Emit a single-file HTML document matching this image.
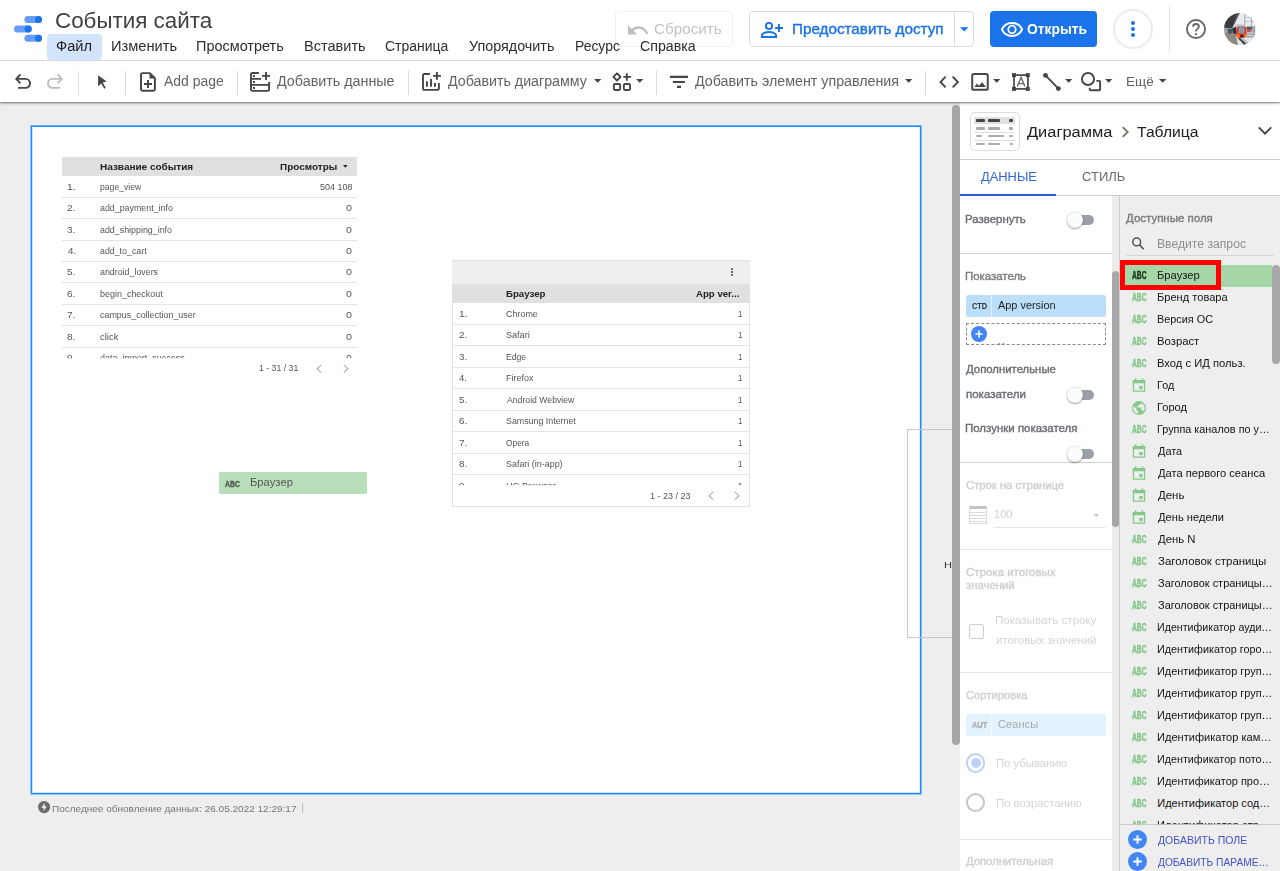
<!DOCTYPE html>
<html lang="ru"><head><meta charset="utf-8"><title>События сайта</title>
<style>
html,body{margin:0;padding:0;}
body{width:1280px;height:871px;overflow:hidden;background:#eeeeee;font-family:"Liberation Sans",sans-serif;}
#root{position:relative;width:1280px;height:871px;overflow:hidden;background:#eeeeee;}
.a{position:absolute;box-sizing:border-box;}
.t{position:absolute;white-space:nowrap;display:block;}
svg{position:absolute;overflow:visible;}
</style></head>
<body>
<div id="root">
<div class="a" style="left:0px;top:0px;width:1280px;height:60px;background:#ffffff;"></div>
<div class="a" style="left:0px;top:60px;width:1280px;height:1px;background:#dadce0;"></div>
<div class="a" style="left:0px;top:61px;width:1280px;height:40.5px;background:#ffffff;box-shadow:0 1px 1.5px rgba(0,0,0,.4),0 2px 3px rgba(0,0,0,.14);z-index:5;"></div>
<svg style="left:13px;top:15px;z-index:6" width="30" height="28" viewBox="13 15 30 28">
<rect x="24.4" y="16.05" width="17.6" height="7" rx="3.5" fill="#669df6"/><circle cx="38.5" cy="19.55" r="3.5" fill="#1a73e8"/>
<rect x="13.9" y="25.4" width="17.9" height="7.2" rx="3.6" fill="#669df6"/><circle cx="28.2" cy="29" r="3.6" fill="#1a73e8"/>
<rect x="24.4" y="34.8" width="17.6" height="7" rx="3.5" fill="#669df6"/><circle cx="38.5" cy="38.3" r="3.5" fill="#1a73e8"/>
</svg>
<div class="a" style="left:47px;top:33.8px;width:55px;height:25.8px;background:#d2e3fc;border-radius:4px;"></div>
<div class="a" style="left:615px;top:11px;width:118px;height:35.5px;border:1px solid #eff0f1;border-radius:4px;background:rgba(255,255,255,.0);"></div>
<svg style="left:628px;top:24.8px" width="20.2" height="9.3" viewBox="0 0 20 9" preserveAspectRatio="none"><path d="M10.5 1.2c-2.65 0-5.05 1-6.9 2.6L0 0.2v9h9L5.4 5.6c1.4-1.15 3.15-1.9 5.1-1.9 3.55 0 6.55 2.3 7.6 5.5L20 8.4C18.6 4.2 14.9 1.2 10.5 1.2z" fill="#bfbfbf"/></svg>
<div class="a" style="left:749px;top:11px;width:225px;height:35.5px;background:#fff;border:1px solid #dadce0;border-radius:4px;"></div>
<div class="a" style="left:954px;top:11.5px;width:1px;height:34.5px;background:#dadce0;"></div>
<svg style="left:760px;top:21px" width="24" height="18" viewBox="760 21 24 18"><g fill="none" stroke="#1a73e8" stroke-width="1.95"><circle cx="769" cy="25.9" r="3.05"/><path d="M761.9 36.9 V35.6 C761.9 33.3 766 32 769 32 S776.1 33.3 776.1 35.6 V36.9 Z"/><path d="M778.9 24.1 V31.9 M775.1 27.9 H783"/></g></svg>
<svg style="left:959.7px;top:26.7px" width="8.5" height="4.5" viewBox="0 0 10 5"><path d="M0 0h10L5 5z" fill="#1a73e8"/></svg>
<div class="a" style="left:990px;top:11px;width:107px;height:35.7px;background:#1a73e8;border-radius:4px;"></div>
<svg style="left:1000px;top:21px" width="24" height="17" viewBox="1000 21 24 17"><g fill="none" stroke="#fff"><path d="M1001.9 29.4 C1003.7 25.4 1007.5 22.9 1012 22.9 S1020.3 25.4 1022.1 29.4 C1020.3 33.4 1016.5 35.9 1012 35.9 S1003.7 33.4 1001.9 29.4 Z" stroke-width="1.95"/><circle cx="1012" cy="29.4" r="3.7" stroke-width="1.8"/></g></svg>
<div class="a" style="left:1113px;top:9px;width:40px;height:40px;border:2px solid #ebecee;border-radius:50%;"></div>
<div class="a" style="left:1130.8000000000002px;top:20.799999999999997px;width:4.2px;height:4.2px;background:#1a73e8;border-radius:50%;"></div>
<div class="a" style="left:1130.8000000000002px;top:26.9px;width:4.2px;height:4.2px;background:#1a73e8;border-radius:50%;"></div>
<div class="a" style="left:1130.8000000000002px;top:32.9px;width:4.2px;height:4.2px;background:#1a73e8;border-radius:50%;"></div>
<div class="a" style="left:1169px;top:6px;width:1px;height:44.6px;background:#dadce0;"></div>
<svg style="left:1186.1px;top:19px" width="20" height="20" viewBox="0 0 20 20"><circle cx="10" cy="10" r="9.05" fill="none" stroke="#63666a" stroke-width="1.9"/><path d="M7 7.7 C7 5.9 8.3 5 10 5 C11.7 5 12.9 6.1 12.9 7.5 C12.9 9.6 9.9 10.1 9.9 12.5" fill="none" stroke="#63666a" stroke-width="1.8"/><rect x="8.9" y="14.2" width="2" height="2" fill="#63666a"/></svg>
<svg style="left:1224px;top:12.7px" width="32" height="32" viewBox="0 0 32 32"><defs><clipPath id="av"><circle cx="16" cy="16.1" r="16"/></clipPath><filter id="bl" x="-10%" y="-10%" width="120%" height="120%"><feGaussianBlur stdDeviation="0.55"/></filter></defs><g clip-path="url(#av)"><g filter="url(#bl)"><rect x="-2" y="-2" width="36" height="36" fill="#dfe1e5"/>
<path d="M-2 -2 H16.5 L10.4 10.5 L8 15.6 L-2 14.5 Z" fill="#3a3a3c"/>
<path d="M13.8 -1 H16.6 L10.6 10.6 L8.3 15 Z" fill="#6e6461"/>
<path d="M16.6 -1 H34 V14 H22 L18 11 H11 Z" fill="#e9ebee"/>
<path d="M20.8 0 V12.5 M27.5 4 V24" stroke="#9aa0a6" stroke-width="0.9" fill="none"/>
<path d="M21 4.5 H29 M22 8.5 H30" stroke="#b4b8bd" stroke-width="0.7" fill="none"/>
<path d="M11.5 10.5 L20 11.5 V14 L12 14.5 Z" fill="#c9ccd1"/>
<path d="M-2 14.5 L8 15.6 L12 13 V22 L14 32 H-2 Z" fill="#8f8782"/>
<path d="M-2 15 L7 16 L4 20 L-2 19 Z" fill="#a9a39e"/>
<rect x="3.8" y="16" width="4.4" height="4.6" fill="#3f5564"/>
<path d="M8 15.5 L12.2 14 V21 L9.5 20.5 Z" fill="#2c3136"/>
<path d="M22.5 13 H31 V26 H22.5 Z" fill="#a4a9af"/>
<path d="M22.5 14.2 H28 V16.5 H22.5 Z" fill="#4a4f57"/>
<rect x="23.3" y="16.8" width="3.2" height="2" fill="#d5452e"/>
<path d="M22.8 20 H30 M22.8 22.5 H30" stroke="#d8dadd" stroke-width="0.8"/>
<path d="M12 24 L16 33 H30 L33 24 L22 25 Z" fill="#e6e8ec"/>
<path d="M13.5 25 L21 33 H25 L16.5 25 Z" fill="#4b4d52"/>
<path d="M19 26 L26 31.5" stroke="#7b7d82" stroke-width="0.8"/>
<path d="M12.1 20.8 C12.1 16 12.8 14 14 13.3 H20.8 C22 14 22.5 16 22.5 20.8 L21.8 24 C20 25 14.5 25 12.8 24 Z" fill="#dc2a1e"/>
<path d="M14.6 13.3 H20.3 C20.8 15.5 20.9 18 20.6 20.6 H14.3 C14.1 18 14.2 15.5 14.6 13.3 Z" fill="#8d979f"/>
<path d="M12.1 20.8 L14.3 20.6 L16 22 H19 L20.6 20.6 L22.5 20.8 L21.8 24 C20 25.2 14.5 25.2 12.8 24 Z" fill="#f5631c"/>
<rect x="16.2" y="22" width="3.4" height="2.4" fill="#262b36"/>
</g></g></svg>
<div class="a" style="left:78px;top:71px;width:1px;height:23.7px;background:#dadce0;z-index:6;"></div>
<div class="a" style="left:124.9px;top:71px;width:1px;height:23.7px;background:#dadce0;z-index:6;"></div>
<div class="a" style="left:237px;top:71px;width:1px;height:23.7px;background:#dadce0;z-index:6;"></div>
<div class="a" style="left:408px;top:71px;width:1px;height:23.7px;background:#dadce0;z-index:6;"></div>
<div class="a" style="left:655.7px;top:71px;width:1px;height:23.7px;background:#dadce0;z-index:6;"></div>
<div class="a" style="left:925px;top:71px;width:1px;height:23.7px;background:#dadce0;z-index:6;"></div>
<svg style="left:14px;top:72px;z-index:6;" width="19" height="18" viewBox="14 72 19 18"><path d="M20.4 74.5 L16.3 78.9 L20.4 83.3 M16.6 78.9 H25.5 a4.5 4.5 0 0 1 0 9 H18.1" fill="none" stroke="#444746" stroke-width="1.9"/></svg>
<svg style="left:46px;top:72px;z-index:6;" width="19" height="18" viewBox="46 72 19 18"><path d="M57.7 74.5 L61.8 78.9 L57.7 83.3 M61.5 78.9 H52.5 a4.5 4.5 0 0 0 0 9 H59.9" fill="none" stroke="#bdbdbd" stroke-width="1.9"/></svg>
<svg style="left:97px;top:74px;z-index:6;" width="12" height="16" viewBox="97 74 12 16"><path d="M98.1 75.2 L106.7 81.4 L102.7 82.6 L105.7 87.8 L104.3 88.7 L101.2 83.5 L98.1 86.2 Z" fill="#444746"/></svg>
<svg style="left:139px;top:71px;z-index:6;" width="18" height="22" viewBox="139 71 18 22"><path d="M142.5 73.1 H149.8 L154.9 78.2 V89.3 a1.5 1.5 0 0 1 -1.5 1.5 H142.5 a1.5 1.5 0 0 1 -1.5 -1.5 V74.6 a1.5 1.5 0 0 1 1.5 -1.5 Z" fill="none" stroke="#444746" stroke-width="1.95" stroke-linejoin="round"/><path d="M149.5 73.1 V78.6 H154.9 Z" fill="#444746"/><path d="M148 80 V88 M144 84 H152" stroke="#444746" stroke-width="1.9" fill="none"/></svg>
<svg style="left:249px;top:71px;z-index:6;" width="22" height="22" viewBox="249 71 22 22"><g fill="none" stroke="#444746" stroke-width="1.9"><path d="M258.8 73 H252.3 a1.3 1.3 0 0 0 -1.3 1.3 V89.6 a1.3 1.3 0 0 0 1.3 1.3 H267.8 a1.3 1.3 0 0 0 1.3 -1.3 V82.1"/><path d="M251 78.9 H261 M251 84.9 H269.1"/><path d="M266 72 V80 M262 75.9 H270"/></g><rect x="253" y="75.1" width="2" height="2" fill="#444746"/><rect x="253" y="81" width="2" height="2" fill="#444746"/><rect x="253" y="87" width="2" height="2" fill="#444746"/></svg>
<svg style="left:421px;top:71px;z-index:6;" width="22" height="22" viewBox="421 71 22 22"><g fill="none" stroke="#444746" stroke-width="1.9"><path d="M429.9 74 H424.3 a1.3 1.3 0 0 0 -1.3 1.3 V88.6 a1.3 1.3 0 0 0 1.3 1.3 H437.6 a1.3 1.3 0 0 0 1.3 -1.3 V83"/><path d="M436.9 72 V79.8 M433 75.9 H441"/><path d="M426.9 81.2 V86.8 M431 79 V86.8 M435 83 V86.8"/></g></svg>
<svg style="left:593.8px;top:79.2px;z-index:6;" width="7.4" height="3.9" viewBox="0 0 10 5"><path d="M0 0h10L5 5z" fill="#444746"/></svg>
<svg style="left:611px;top:71px;z-index:6;" width="22" height="22" viewBox="611 71 22 22"><g fill="none" stroke="#444746" stroke-width="1.9"><path d="M616.95 73.3 L620.55 76.9 L616.95 80.5 L613.35 76.9 Z" stroke-linejoin="round"/><rect x="613.85" y="84.05" width="6.3" height="6" rx="1.2"/><rect x="623.85" y="84.05" width="6.2" height="6" rx="1.2"/><path d="M626.8 73.2 V80.8 M623.3 76.9 H631.1"/></g></svg>
<svg style="left:635.5px;top:79.2px;z-index:6;" width="7.4" height="3.9" viewBox="0 0 10 5"><path d="M0 0h10L5 5z" fill="#444746"/></svg>
<svg style="left:669px;top:75px;z-index:6;" width="20" height="13" viewBox="669 75 20 13"><path d="M669.9 76.9 H688 M672.9 82 H684.9 M677 86.9 H681" stroke="#444746" stroke-width="2.1" fill="none"/></svg>
<svg style="left:904.8px;top:79.2px;z-index:6;" width="7.4" height="3.9" viewBox="0 0 10 5"><path d="M0 0h10L5 5z" fill="#444746"/></svg>
<svg style="left:938px;top:75px;z-index:6;" width="23" height="14" viewBox="938 75 23 14"><path d="M945.6 76.6 L940.5 82 L945.6 87.3 M952.7 76.6 L957.9 82 L952.7 87.3" stroke="#444746" stroke-width="1.9" fill="none"/></svg>
<svg style="left:970px;top:72px;z-index:6;" width="20" height="20" viewBox="970 72 20 20"><rect x="972.2" y="74" width="15.55" height="15.8" rx="1.6" fill="none" stroke="#444746" stroke-width="1.95"/><path d="M974.4 86.9 L976.9 83.4 L978.9 85.7 L982.2 82.2 L985.9 86.9 Z" fill="#444746"/></svg>
<svg style="left:993.4px;top:79.2px;z-index:6;" width="7.4" height="3.9" viewBox="0 0 10 5"><path d="M0 0h10L5 5z" fill="#444746"/></svg>
<svg style="left:1011px;top:72px;z-index:6;" width="20" height="20" viewBox="1011 72 20 20"><rect x="1014" y="75.1" width="13.9" height="13.8" fill="none" stroke="#444746" stroke-width="1.7"/><g fill="#444746"><rect x="1012" y="73.1" width="4" height="4"/><rect x="1025.8" y="73.1" width="4" height="4"/><rect x="1012" y="86.9" width="4" height="4"/><rect x="1025.8" y="86.9" width="4" height="4"/></g><path d="M1017.3 86.6 L1021.1 77.3 L1024.9 86.6 M1018.6 83.7 H1023.6" fill="none" stroke="#5f6368" stroke-width="1.3"/></svg>
<svg style="left:1042px;top:72px;z-index:6;" width="20" height="20" viewBox="1042 72 20 20"><path d="M1045.5 75.4 L1058.4 88.6" stroke="#444746" stroke-width="1.9"/><circle cx="1045.5" cy="75.4" r="2.45" fill="#444746"/><circle cx="1058.4" cy="88.6" r="2.45" fill="#444746"/></svg>
<svg style="left:1065.4px;top:79.2px;z-index:6;" width="7.4" height="3.9" viewBox="0 0 10 5"><path d="M0 0h10L5 5z" fill="#444746"/></svg>
<svg style="left:1080px;top:71px;z-index:6;" width="23" height="22" viewBox="1080 71 23 22"><circle cx="1088" cy="79" r="6.05" fill="none" stroke="#444746" stroke-width="1.9"/><path d="M1096.4 80.9 H1099.1 a1 1 0 0 1 1 1 V89.2 a1 1 0 0 1 -1 1 H1090.7 a1 1 0 0 1 -1 -1 V87.8" fill="none" stroke="#444746" stroke-width="1.9"/></svg>
<svg style="left:1105.4px;top:79.2px;z-index:6;" width="7.4" height="3.9" viewBox="0 0 10 5"><path d="M0 0h10L5 5z" fill="#444746"/></svg>
<svg style="left:1158.6px;top:79.2px;z-index:6;" width="7.4" height="3.9" viewBox="0 0 10 5"><path d="M0 0h10L5 5z" fill="#444746"/></svg>
<svg style="left:0;top:0" width="960" height="871" viewBox="0 0 960 871"><rect x="31.4" y="126.2" width="889.3" height="667.4" fill="#ffffff" stroke="#1e8cff" stroke-width="1.65"/></svg>
<div class="a" style="left:907px;top:428.6px;width:50px;height:209px;border:1px solid #c8c8c8;border-right:none;"></div>
<div class="a" style="left:952.2px;top:105px;width:7.6px;height:640px;background:#a6a6a6;border-radius:4px 4px 4px 4px;"></div>
<div class="a" style="left:61.7px;top:156.8px;width:295.6px;height:18.8px;background:#e0e0e0;"></div>
<svg style="left:342.8px;top:164.5px" width="4.6" height="2.8" viewBox="0 0 10 6"><path d="M0 0h10L5 6z" fill="#222"/></svg>
<div class="a" style="left:61.7px;top:196.7px;width:295.6px;height:1px;background:#e3e3e3;"></div>
<div class="a" style="left:61.7px;top:218.14px;width:295.6px;height:1px;background:#e3e3e3;"></div>
<div class="a" style="left:61.7px;top:239.57999999999998px;width:295.6px;height:1px;background:#e3e3e3;"></div>
<div class="a" style="left:61.7px;top:261.02px;width:295.6px;height:1px;background:#e3e3e3;"></div>
<div class="a" style="left:61.7px;top:282.46px;width:295.6px;height:1px;background:#e3e3e3;"></div>
<div class="a" style="left:61.7px;top:303.9px;width:295.6px;height:1px;background:#e3e3e3;"></div>
<div class="a" style="left:61.7px;top:325.34000000000003px;width:295.6px;height:1px;background:#e3e3e3;"></div>
<div class="a" style="left:61.7px;top:346.78px;width:295.6px;height:1px;background:#e3e3e3;"></div>
<svg style="left:316.4px;top:363.6px" width="6" height="9.5" viewBox="0 0 6 9.5"><path d="M5.2 0.8 L1 4.75 L5.2 8.7" fill="none" stroke="#adadad" stroke-width="1.1"/></svg>
<svg style="left:343px;top:363.6px" width="6" height="9.5" viewBox="0 0 6 9.5"><path d="M0.8 0.8 L5 4.75 L0.8 8.7" fill="none" stroke="#adadad" stroke-width="1.1"/></svg>
<div class="a" style="left:451.7px;top:260.2px;width:298.6px;height:246.6px;background:#ffffff;border:1px solid #e2e2e2;"></div>
<div class="a" style="left:452.2px;top:260.7px;width:297.6px;height:23.5px;background:#efefef;"></div>
<div class="a" style="left:730.6px;top:267.7px;width:2.1px;height:2.1px;background:#444;border-radius:50%;"></div>
<div class="a" style="left:730.6px;top:271px;width:2.1px;height:2.1px;background:#444;border-radius:50%;"></div>
<div class="a" style="left:730.6px;top:274.3px;width:2.1px;height:2.1px;background:#444;border-radius:50%;"></div>
<div class="a" style="left:452.2px;top:284.2px;width:297.6px;height:18.6px;background:#e0e0e0;"></div>
<div class="a" style="left:452.2px;top:323.5px;width:297.6px;height:1px;background:#e3e3e3;"></div>
<div class="a" style="left:452.2px;top:345px;width:297.6px;height:1px;background:#e3e3e3;"></div>
<div class="a" style="left:452.2px;top:366.5px;width:297.6px;height:1px;background:#e3e3e3;"></div>
<div class="a" style="left:452.2px;top:388px;width:297.6px;height:1px;background:#e3e3e3;"></div>
<div class="a" style="left:452.2px;top:409.5px;width:297.6px;height:1px;background:#e3e3e3;"></div>
<div class="a" style="left:452.2px;top:431px;width:297.6px;height:1px;background:#e3e3e3;"></div>
<div class="a" style="left:452.2px;top:452.5px;width:297.6px;height:1px;background:#e3e3e3;"></div>
<div class="a" style="left:452.2px;top:474px;width:297.6px;height:1px;background:#e3e3e3;"></div>
<svg style="left:708px;top:491.2px" width="6" height="9.5" viewBox="0 0 6 9.5"><path d="M5.2 0.8 L1 4.75 L5.2 8.7" fill="none" stroke="#adadad" stroke-width="1.1"/></svg>
<svg style="left:734.4px;top:491.2px" width="6" height="9.5" viewBox="0 0 6 9.5"><path d="M0.8 0.8 L5 4.75 L0.8 8.7" fill="none" stroke="#adadad" stroke-width="1.1"/></svg>
<div class="a" style="left:219px;top:472px;width:148px;height:21.8px;background:#b9dfba;border-radius:1.5px;"></div>
<svg style="left:37.8px;top:800.9px" width="12.2" height="12.2" viewBox="0 0 12 12"><circle cx="6" cy="6" r="6" fill="#6b6b6b"/><path d="M6.9 1.8 L3.4 6.7 H5.7 L5.1 10.2 L8.6 5.3 H6.3 Z" fill="#fff"/></svg>
<div class="a" style="left:302px;top:803px;width:1px;height:9.5px;background:#c4c4c4;"></div>
<div class="a" style="left:960px;top:101.5px;width:320px;height:770px;background:#ffffff;"></div>
<div class="a" style="left:970.2px;top:112.2px;width:49.6px;height:38.5px;background:#fff;border:1px solid #dadce0;border-radius:5px;"></div>
<div class="a" style="left:974px;top:117.3px;width:40.8px;height:7px;background:#e0e0e0;"></div>
<div class="a" style="left:975.9px;top:119.4px;width:9.5px;height:2.7px;background:#444;border-radius:1px;"></div>
<div class="a" style="left:975.9px;top:127.1px;width:9.5px;height:2.5px;background:#aaa;border-radius:1px;"></div>
<div class="a" style="left:988.2px;top:119.4px;width:12px;height:2.7px;background:#444;border-radius:1px;"></div>
<div class="a" style="left:988.2px;top:127.1px;width:12px;height:2.5px;background:#aaa;border-radius:1px;"></div>
<div class="a" style="left:1008.5px;top:119.4px;width:4.6px;height:2.7px;background:#444;border-radius:1px;"></div>
<div class="a" style="left:1008.5px;top:127.1px;width:4.6px;height:2.5px;background:#aaa;border-radius:1px;"></div>
<div class="a" style="left:975.9px;top:134.8px;width:6.6px;height:2.5px;background:#aaa;border-radius:1px;"></div>
<div class="a" style="left:988.2px;top:134.8px;width:15.8px;height:2.5px;background:#aaa;border-radius:1px;"></div>
<div class="a" style="left:1008.5px;top:134.8px;width:4.6px;height:2.5px;background:#aaa;border-radius:1px;"></div>
<div class="a" style="left:975.9px;top:142.5px;width:9.5px;height:2.5px;background:#aaa;border-radius:1px;"></div>
<div class="a" style="left:988.2px;top:142.5px;width:12px;height:2.5px;background:#aaa;border-radius:1px;"></div>
<div class="a" style="left:1009.6px;top:142.5px;width:3.5px;height:2.5px;background:#aaa;border-radius:1px;"></div>
<div class="a" style="left:974px;top:132px;width:40.8px;height:0.8px;background:#dddddd;"></div>
<div class="a" style="left:974px;top:140px;width:40.8px;height:0.8px;background:#dddddd;"></div>
<svg style="left:1121px;top:126px" width="9" height="12" viewBox="1121 126 9 12"><path d="M1122.7 127.2 L1127.7 132 L1122.7 136.8" fill="none" stroke="#74745f" stroke-width="1.8"/></svg>
<svg style="left:1257px;top:125px" width="16" height="11" viewBox="1257 125 16 11"><path d="M1258.8 127.3 L1265 133.6 L1271.2 127.3" fill="none" stroke="#444" stroke-width="1.9"/></svg>
<div class="a" style="left:960px;top:159px;width:320px;height:1px;background:#cfcfcf;"></div>
<div class="a" style="left:960px;top:195px;width:320px;height:1px;background:#cccccc;"></div>
<div class="a" style="left:960px;top:193.5px;width:96px;height:2.5px;background:#2a5bd7;"></div>
<div class="a" style="left:1112px;top:196px;width:7px;height:675px;background:#ececec;"></div>
<div class="a" style="left:1119px;top:196px;width:1px;height:675px;background:#cccccc;"></div>
<div class="a" style="left:1120px;top:196px;width:160px;height:675px;background:#eeeeee;"></div>
<div class="a" style="left:1112.4px;top:270.8px;width:6.6px;height:256.7px;background:#a8a8a8;border-radius:3.5px;"></div>
<div class="a" style="left:1073.5px;top:215px;width:20px;height:10px;background:#9aa0a6;border-radius:5px;"></div>
<div class="a" style="left:1067px;top:212px;width:16px;height:16px;background:#fcfcfc;border-radius:50%;box-shadow:0 1px 2px rgba(0,0,0,.35),0 0 1px rgba(0,0,0,.25);"></div>
<div class="a" style="left:960px;top:253px;width:152px;height:1px;background:#d2d2d2;"></div>
<div class="a" style="left:966px;top:294.9px;width:140px;height:22.1px;background:#bbdefb;border-radius:2.5px;"></div>
<div class="a" style="left:990.6px;top:294.9px;width:1px;height:22.1px;background:#e6f2fd;"></div>
<div class="a" style="left:966px;top:323.2px;width:140px;height:21.5px;border:1px dashed #8c8c8c;"></div>
<div class="a" style="left:971.1px;top:325.9px;width:16px;height:16px;background:#4285f4;border-radius:50%;"></div>
<svg style="left:971.1px;top:325.9px" width="16" height="16" viewBox="0 0 16 16"><path d="M8 4.4 V11.6 M4.4 8 H11.6" stroke="#fff" stroke-width="1.7" fill="none"/></svg>
<div class="a" style="left:998px;top:342px;width:12px;height:2.5px;overflow:hidden;"><span class="t" style="left:0;top:0;font-size:8px;line-height:8px;color:#777;">M</span></div>
<div class="a" style="left:1073.5px;top:389.9px;width:20px;height:10px;background:#9aa0a6;border-radius:5px;"></div>
<div class="a" style="left:1067px;top:386.9px;width:16px;height:16px;background:#fcfcfc;border-radius:50%;box-shadow:0 1px 2px rgba(0,0,0,.35),0 0 1px rgba(0,0,0,.25);"></div>
<div class="a" style="left:960px;top:462.2px;width:152px;height:1px;background:#d2d2d2;"></div>
<div class="a" style="left:1073.5px;top:449px;width:20px;height:10px;background:#9aa0a6;border-radius:5px;"></div>
<div class="a" style="left:1067px;top:446px;width:16px;height:16px;background:#fcfcfc;border-radius:50%;box-shadow:0 1px 2px rgba(0,0,0,.35),0 0 1px rgba(0,0,0,.25);"></div>
<div class="a" style="left:969.2px;top:506px;width:17.8px;height:2.8px;background:#c4c4c4;"></div>
<div class="a" style="left:969.2px;top:511.5px;width:17.8px;height:0.7px;background:#dcdcdc;"></div>
<div class="a" style="left:969.2px;top:514.5px;width:17.8px;height:0.7px;background:#dcdcdc;"></div>
<div class="a" style="left:969.2px;top:517.5px;width:17.8px;height:0.7px;background:#dcdcdc;"></div>
<div class="a" style="left:969.2px;top:520.5px;width:17.8px;height:0.7px;background:#dcdcdc;"></div>
<div class="a" style="left:969.2px;top:523.4px;width:17.8px;height:0.7px;background:#dcdcdc;"></div>
<div class="a" style="left:969.2px;top:506px;width:0.7px;height:18px;background:#dcdcdc;"></div>
<div class="a" style="left:986.3px;top:506px;width:0.7px;height:18px;background:#dcdcdc;"></div>
<svg style="left:1093.4px;top:513.6px" width="6.4" height="3.2" viewBox="0 0 10 5"><path d="M0 0h10L5 5z" fill="#cccccc"/></svg>
<div class="a" style="left:994.3px;top:527px;width:111.5px;height:1px;background:#e6e6e6;"></div>
<div class="a" style="left:960px;top:549px;width:152px;height:1px;background:#e4e4e4;"></div>
<div class="a" style="left:968.5px;top:623.5px;width:15px;height:15px;background:#fff;border:1.8px solid #cdcdcd;border-radius:2px;"></div>
<div class="a" style="left:960px;top:672px;width:152px;height:1px;background:#e4e4e4;"></div>
<div class="a" style="left:966px;top:713.8px;width:140px;height:22px;background:#e3f2fd;border-radius:2.5px;"></div>
<div class="a" style="left:990.6px;top:713.8px;width:1px;height:22px;background:#f3f9fe;"></div>
<div class="a" style="left:966.3px;top:753.4px;width:19.2px;height:19.2px;background:#fff;border:2px solid #bcd2fb;border-radius:50%;"></div>
<div class="a" style="left:970.9px;top:758px;width:10px;height:10px;background:#bcd2fb;border-radius:50%;"></div>
<div class="a" style="left:966.3px;top:793.3px;width:19.2px;height:19.2px;background:#fff;border:2px solid #c6c6c6;border-radius:50%;"></div>
<div class="a" style="left:960px;top:838.6px;width:152px;height:1px;background:#e4e4e4;"></div>
<svg style="left:1131px;top:236px" width="14" height="15" viewBox="1131 236 14 15"><circle cx="1136.7" cy="241.9" r="3.9" fill="none" stroke="#555" stroke-width="1.5"/><path d="M1139.6 244.9 L1143.7 249.3" stroke="#555" stroke-width="1.6"/></svg>
<div class="a" style="left:1126.3px;top:255px;width:147.7px;height:1px;background:#d4d4d4;"></div>
<div class="a" style="left:1120px;top:264.8px;width:152px;height:22px;background:#a5d6a7;"></div>
<svg style="left:1132px;top:378.2px" width="14" height="14" viewBox="0 0 14 14"><path d="M1.45 2.6 H12.55 V13.1 H1.45 Z" fill="none" stroke="#85c888" stroke-width="1.3"/><rect x="0.8" y="1.95" width="12.4" height="3.3" fill="#85c888"/><rect x="2.9" y="0.2" width="1.4" height="2.5" fill="#85c888"/><rect x="9.7" y="0.2" width="1.4" height="2.5" fill="#85c888"/><rect x="7.3" y="8" width="3.3" height="3.2" fill="#85c888"/></svg>
<svg style="left:1131.8px;top:401.2px" width="14" height="14" viewBox="0 0 14 14"><circle cx="7" cy="7" r="7" fill="#85c888"/><path d="M6.2 1.3 C4 1.6 2.2 3 1.5 5 L4.5 7.8 V9 L6.2 10.7 V12.7 C3.5 12.3 1.3 10 1.3 7 C1.3 4 3.4 1.7 6.2 1.3 Z M11.6 10.3 C11.3 9.6 10.7 9.2 10 9.2 H9.3 V7.3 C9.3 6.9 9 6.6 8.6 6.6 H4.8 V5.3 H6.1 C6.5 5.3 6.8 5 6.8 4.6 V3.4 H8.1 C8.8 3.4 9.3 2.9 9.3 2.2 V1.9 C11.3 2.7 12.7 4.7 12.7 7 C12.7 8.3 12.3 9.4 11.6 10.3 Z" fill="#eeeeee"/></svg>
<svg style="left:1132px;top:444.2px" width="14" height="14" viewBox="0 0 14 14"><path d="M1.45 2.6 H12.55 V13.1 H1.45 Z" fill="none" stroke="#85c888" stroke-width="1.3"/><rect x="0.8" y="1.95" width="12.4" height="3.3" fill="#85c888"/><rect x="2.9" y="0.2" width="1.4" height="2.5" fill="#85c888"/><rect x="9.7" y="0.2" width="1.4" height="2.5" fill="#85c888"/><rect x="7.3" y="8" width="3.3" height="3.2" fill="#85c888"/></svg>
<svg style="left:1132px;top:466.2px" width="14" height="14" viewBox="0 0 14 14"><path d="M1.45 2.6 H12.55 V13.1 H1.45 Z" fill="none" stroke="#85c888" stroke-width="1.3"/><rect x="0.8" y="1.95" width="12.4" height="3.3" fill="#85c888"/><rect x="2.9" y="0.2" width="1.4" height="2.5" fill="#85c888"/><rect x="9.7" y="0.2" width="1.4" height="2.5" fill="#85c888"/><rect x="7.3" y="8" width="3.3" height="3.2" fill="#85c888"/></svg>
<svg style="left:1132px;top:488.2px" width="14" height="14" viewBox="0 0 14 14"><path d="M1.45 2.6 H12.55 V13.1 H1.45 Z" fill="none" stroke="#85c888" stroke-width="1.3"/><rect x="0.8" y="1.95" width="12.4" height="3.3" fill="#85c888"/><rect x="2.9" y="0.2" width="1.4" height="2.5" fill="#85c888"/><rect x="9.7" y="0.2" width="1.4" height="2.5" fill="#85c888"/><rect x="7.3" y="8" width="3.3" height="3.2" fill="#85c888"/></svg>
<svg style="left:1132px;top:510.19999999999993px" width="14" height="14" viewBox="0 0 14 14"><path d="M1.45 2.6 H12.55 V13.1 H1.45 Z" fill="none" stroke="#85c888" stroke-width="1.3"/><rect x="0.8" y="1.95" width="12.4" height="3.3" fill="#85c888"/><rect x="2.9" y="0.2" width="1.4" height="2.5" fill="#85c888"/><rect x="9.7" y="0.2" width="1.4" height="2.5" fill="#85c888"/><rect x="7.3" y="8" width="3.3" height="3.2" fill="#85c888"/></svg>
<div class="a" style="left:1120px;top:260px;width:101px;height:30px;border:5px solid #ff0000;"></div>
<div class="a" style="left:1272.3px;top:264.7px;width:7.7px;height:99.7px;background:#a8a8a8;border-radius:4px;"></div>
<div class="a" style="left:1120px;top:824.3px;width:160px;height:46.7px;background:#eeeeee;"></div>
<div class="a" style="left:1120px;top:824px;width:160px;height:1px;background:#cccccc;"></div>
<div class="a" style="left:1128.4px;top:830.4px;width:19px;height:19px;background:#4285f4;border-radius:50%;"></div>
<svg style="left:1128.4px;top:830.4px" width="19" height="19" viewBox="0 0 19 19"><path d="M9.5 5.3 V13.7 M5.3 9.5 H13.7" stroke="#fff" stroke-width="1.9" fill="none"/></svg>
<div class="a" style="left:1128.4px;top:852.2px;width:19px;height:19px;background:#4285f4;border-radius:50%;"></div>
<svg style="left:1128.4px;top:852.2px" width="19" height="19" viewBox="0 0 19 19"><path d="M9.5 5.3 V13.7 M5.3 9.5 H13.7" stroke="#fff" stroke-width="1.9" fill="none"/></svg>
<span class="t" style="left:55.11px;top:8px;font-size:21.6px;line-height:25px;color:#3c4043;transform:scaleX(1.0358);transform-origin:0 0;">События сайта</span>
<span class="t" style="left:56.15px;top:38px;font-size:14px;line-height:16px;color:#202124;transform:scaleX(1.0493);transform-origin:0 0;">Файл</span>
<span class="t" style="left:110.8px;top:38px;font-size:14px;line-height:16px;color:#2b2d30;transform:scaleX(1.0459);transform-origin:0 0;">Изменить</span>
<span class="t" style="left:195.83px;top:38px;font-size:14px;line-height:16px;color:#2b2d30;transform:scaleX(1.0324);transform-origin:0 0;">Просмотреть</span>
<span class="t" style="left:303.81px;top:38px;font-size:14px;line-height:16px;color:#2b2d30;transform:scaleX(1.0385);transform-origin:0 0;">Вставить</span>
<span class="t" style="left:384.79px;top:38px;font-size:14px;line-height:16px;color:#2b2d30;transform:scaleX(0.9962);transform-origin:0 0;">Страница</span>
<span class="t" style="left:468.61px;top:38px;font-size:14px;line-height:16px;color:#2b2d30;transform:scaleX(1.0245);transform-origin:0 0;">Упорядочить</span>
<span class="t" style="left:575.16px;top:38px;font-size:14px;line-height:16px;color:#2b2d30;transform:scaleX(0.9934);transform-origin:0 0;">Ресурс</span>
<span class="t" style="left:639.98px;top:38px;font-size:14px;line-height:16px;color:#2b2d30;transform:scaleX(1.0148);transform-origin:0 0;">Справка</span>
<span class="t" style="left:653.93px;top:21px;font-size:14px;line-height:16px;color:#c2c2c2;transform:scaleX(1.0896);transform-origin:0 0;">Сбросить</span>
<span class="t" style="left:792.37px;top:21px;font-size:14px;line-height:16px;color:#1a73e8;transform:scaleX(1.0881);transform-origin:0 0;-webkit-text-stroke:0.35px #1a73e8;">Предоставить доступ</span>
<span class="t" style="left:1027.33px;top:21px;font-size:14px;line-height:16px;color:#ffffff;transform:scaleX(0.9871);transform-origin:0 0;font-weight:700;">Открыть</span>
<span class="t" style="left:163.97px;top:73px;font-size:14px;line-height:16px;color:#5f6368;transform:scaleX(0.995);transform-origin:0 0;z-index:6;">Add page</span>
<span class="t" style="left:276.9px;top:73px;font-size:14px;line-height:16px;color:#5f6368;transform:scaleX(1.0221);transform-origin:0 0;z-index:6;">Добавить данные</span>
<span class="t" style="left:448.15px;top:73px;font-size:14px;line-height:16px;color:#5f6368;transform:scaleX(1.0165);transform-origin:0 0;z-index:6;">Добавить диаграмму</span>
<span class="t" style="left:694.9px;top:73px;font-size:14px;line-height:16px;color:#5f6368;transform:scaleX(1.0184);transform-origin:0 0;z-index:6;">Добавить элемент управления</span>
<span class="t" style="left:1125.89px;top:74px;font-size:13px;line-height:15px;color:#5f6368;transform:scaleX(1.042);transform-origin:0 0;z-index:6;">Ещё</span>
<span class="t" style="left:943.89px;top:559px;font-size:9.6px;line-height:11px;color:#333;transform:scaleX(1.1562);transform-origin:0 0;">Н</span>
<span class="t" style="left:99.73px;top:161px;font-size:9.6px;line-height:11px;color:#222;transform:scaleX(1.0418);transform-origin:0 0;font-weight:700;">Название события</span>
<span class="t" style="left:280.13px;top:161px;font-size:9.6px;line-height:11px;color:#222;transform:scaleX(1.0371);transform-origin:0 0;font-weight:700;">Просмотры</span>
<span class="t" style="left:67px;top:181px;font-size:9.7px;line-height:11px;color:#555555;transform:scaleX(1.0827);transform-origin:0 0;">1.</span>
<span class="t" style="left:99.84px;top:181px;font-size:9.7px;line-height:11px;color:#555555;transform:scaleX(0.8913);transform-origin:0 0;">page_view</span>
<span class="t" style="left:319.64px;top:181px;font-size:9.7px;line-height:11px;color:#555555;transform:scaleX(0.9255);transform-origin:0 0;">504 108</span>
<span class="t" style="left:67.29px;top:202px;font-size:9.7px;line-height:11px;color:#555555;transform:scaleX(1.0423);transform-origin:0 0;">2.</span>
<span class="t" style="left:100.02px;top:202px;font-size:9.7px;line-height:11px;color:#555555;transform:scaleX(0.914);transform-origin:0 0;">add_payment_info</span>
<span class="t" style="left:346.18px;top:202px;font-size:9.7px;line-height:11px;color:#555555;transform:scaleX(1.0999);transform-origin:0 0;">0</span>
<span class="t" style="left:67.42px;top:224px;font-size:9.7px;line-height:11px;color:#555555;transform:scaleX(1.0242);transform-origin:0 0;">3.</span>
<span class="t" style="left:100.02px;top:224px;font-size:9.7px;line-height:11px;color:#555555;transform:scaleX(0.915);transform-origin:0 0;">add_shipping_info</span>
<span class="t" style="left:346.18px;top:224px;font-size:9.7px;line-height:11px;color:#555555;transform:scaleX(1.0999);transform-origin:0 0;">0</span>
<span class="t" style="left:67.58px;top:245px;font-size:9.7px;line-height:11px;color:#555555;transform:scaleX(1.0027);transform-origin:0 0;">4.</span>
<span class="t" style="left:100.02px;top:245px;font-size:9.7px;line-height:11px;color:#555555;transform:scaleX(0.9103);transform-origin:0 0;">add_to_cart</span>
<span class="t" style="left:346.18px;top:245px;font-size:9.7px;line-height:11px;color:#555555;transform:scaleX(1.0999);transform-origin:0 0;">0</span>
<span class="t" style="left:67.4px;top:266px;font-size:9.7px;line-height:11px;color:#555555;transform:scaleX(1.0271);transform-origin:0 0;">5.</span>
<span class="t" style="left:100.02px;top:266px;font-size:9.7px;line-height:11px;color:#555555;transform:scaleX(0.9131);transform-origin:0 0;">android_lovers</span>
<span class="t" style="left:346.18px;top:266px;font-size:9.7px;line-height:11px;color:#555555;transform:scaleX(1.0999);transform-origin:0 0;">0</span>
<span class="t" style="left:67.29px;top:288px;font-size:9.7px;line-height:11px;color:#555555;transform:scaleX(1.043);transform-origin:0 0;">6.</span>
<span class="t" style="left:99.82px;top:288px;font-size:9.7px;line-height:11px;color:#555555;transform:scaleX(0.9248);transform-origin:0 0;">begin_checkout</span>
<span class="t" style="left:346.18px;top:288px;font-size:9.7px;line-height:11px;color:#555555;transform:scaleX(1.0999);transform-origin:0 0;">0</span>
<span class="t" style="left:67.28px;top:309px;font-size:9.7px;line-height:11px;color:#555555;transform:scaleX(1.0437);transform-origin:0 0;">7.</span>
<span class="t" style="left:100.02px;top:309px;font-size:9.7px;line-height:11px;color:#555555;transform:scaleX(0.9209);transform-origin:0 0;">campus_collection_user</span>
<span class="t" style="left:346.18px;top:309px;font-size:9.7px;line-height:11px;color:#555555;transform:scaleX(1.0999);transform-origin:0 0;">0</span>
<span class="t" style="left:67.36px;top:331px;font-size:9.7px;line-height:11px;color:#555555;transform:scaleX(1.0321);transform-origin:0 0;">8.</span>
<span class="t" style="left:100px;top:331px;font-size:9.7px;line-height:11px;color:#555555;transform:scaleX(0.975);transform-origin:0 0;">click</span>
<span class="t" style="left:346.18px;top:331px;font-size:9.7px;line-height:11px;color:#555555;transform:scaleX(1.0999);transform-origin:0 0;">0</span>
<span class="t" style="left:67.33px;top:352px;font-size:9.7px;line-height:11px;color:#555555;transform:scaleX(1.0371);transform-origin:0 0;clip-path:inset(-12px -5px 4.8px -5px);">9.</span>
<span class="t" style="left:100.02px;top:352px;font-size:9.7px;line-height:11px;color:#555555;transform:scaleX(0.9252);transform-origin:0 0;clip-path:inset(-12px -5px 4.8px -5px);">data_import_success</span>
<span class="t" style="left:346.22px;top:352px;font-size:9.7px;line-height:11px;color:#555555;clip-path:inset(-12px -5px 4.8px -5px);">0</span>
<span class="t" style="left:259.14px;top:363px;font-size:9.3px;line-height:10px;color:#555;transform:scaleX(0.9382);transform-origin:0 0;">1 - 31 / 31</span>
<span class="t" style="left:505.95px;top:288px;font-size:9.6px;line-height:11px;color:#222;transform:scaleX(1.0083);transform-origin:0 0;font-weight:700;">Браузер</span>
<span class="t" style="left:695.76px;top:288px;font-size:9.6px;line-height:11px;color:#222;transform:scaleX(1.0036);transform-origin:0 0;font-weight:700;">App ver...</span>
<span class="t" style="left:458.61px;top:308px;font-size:9.7px;line-height:11px;color:#555555;transform:scaleX(1.0673);transform-origin:0 0;">1.</span>
<span class="t" style="left:506.15px;top:308px;font-size:9.7px;line-height:11px;color:#555555;transform:scaleX(0.9233);transform-origin:0 0;">Chrome</span>
<span class="t" style="left:737.6px;top:308px;font-size:9.7px;line-height:11px;color:#555555;transform:scaleX(0.813);transform-origin:0 0;">1</span>
<span class="t" style="left:458.9px;top:329px;font-size:9.7px;line-height:11px;color:#555555;transform:scaleX(1.0274);transform-origin:0 0;">2.</span>
<span class="t" style="left:506.19px;top:329px;font-size:9.7px;line-height:11px;color:#555555;transform:scaleX(0.9363);transform-origin:0 0;">Safari</span>
<span class="t" style="left:737.6px;top:329px;font-size:9.7px;line-height:11px;color:#555555;transform:scaleX(0.813);transform-origin:0 0;">1</span>
<span class="t" style="left:459.03px;top:351px;font-size:9.7px;line-height:11px;color:#555555;transform:scaleX(1.0096);transform-origin:0 0;">3.</span>
<span class="t" style="left:505.89px;top:351px;font-size:9.7px;line-height:11px;color:#555555;transform:scaleX(0.8914);transform-origin:0 0;">Edge</span>
<span class="t" style="left:737.6px;top:351px;font-size:9.7px;line-height:11px;color:#555555;transform:scaleX(0.813);transform-origin:0 0;">1</span>
<span class="t" style="left:459.18px;top:372px;font-size:9.7px;line-height:11px;color:#555555;transform:scaleX(0.9883);transform-origin:0 0;">4.</span>
<span class="t" style="left:505.86px;top:372px;font-size:9.7px;line-height:11px;color:#555555;transform:scaleX(0.9289);transform-origin:0 0;">Firefox</span>
<span class="t" style="left:737.6px;top:372px;font-size:9.7px;line-height:11px;color:#555555;transform:scaleX(0.813);transform-origin:0 0;">1</span>
<span class="t" style="left:459.01px;top:394px;font-size:9.7px;line-height:11px;color:#555555;transform:scaleX(1.0124);transform-origin:0 0;">5.</span>
<span class="t" style="left:506.58px;top:394px;font-size:9.7px;line-height:11px;color:#555555;transform:scaleX(0.8956);transform-origin:0 0;">Android Webview</span>
<span class="t" style="left:737.6px;top:394px;font-size:9.7px;line-height:11px;color:#555555;transform:scaleX(0.813);transform-origin:0 0;">1</span>
<span class="t" style="left:458.89px;top:415px;font-size:9.7px;line-height:11px;color:#555555;transform:scaleX(1.0281);transform-origin:0 0;">6.</span>
<span class="t" style="left:506.2px;top:415px;font-size:9.7px;line-height:11px;color:#555555;transform:scaleX(0.9125);transform-origin:0 0;">Samsung Internet</span>
<span class="t" style="left:737.6px;top:415px;font-size:9.7px;line-height:11px;color:#555555;transform:scaleX(0.813);transform-origin:0 0;">1</span>
<span class="t" style="left:458.89px;top:437px;font-size:9.7px;line-height:11px;color:#555555;transform:scaleX(1.0288);transform-origin:0 0;">7.</span>
<span class="t" style="left:506.2px;top:437px;font-size:9.7px;line-height:11px;color:#555555;transform:scaleX(0.8642);transform-origin:0 0;">Opera</span>
<span class="t" style="left:737.6px;top:437px;font-size:9.7px;line-height:11px;color:#555555;transform:scaleX(0.813);transform-origin:0 0;">1</span>
<span class="t" style="left:458.97px;top:458px;font-size:9.7px;line-height:11px;color:#555555;transform:scaleX(1.0173);transform-origin:0 0;">8.</span>
<span class="t" style="left:506.19px;top:458px;font-size:9.7px;line-height:11px;color:#555555;transform:scaleX(0.9219);transform-origin:0 0;">Safari (in-app)</span>
<span class="t" style="left:737.6px;top:458px;font-size:9.7px;line-height:11px;color:#555555;transform:scaleX(0.813);transform-origin:0 0;">1</span>
<span class="t" style="left:458.94px;top:480px;font-size:9.7px;line-height:11px;color:#555555;transform:scaleX(1.0223);transform-origin:0 0;clip-path:inset(-10px -5px 5.8px -5px);">9.</span>
<span class="t" style="left:505.89px;top:480px;font-size:9.7px;line-height:11px;color:#555555;transform:scaleX(0.9519);transform-origin:0 0;clip-path:inset(-10px -5px 5.8px -5px);">UC Browser</span>
<span class="t" style="left:737.46px;top:480px;font-size:9.7px;line-height:11px;color:#555555;clip-path:inset(-10px -5px 5.8px -5px);">1</span>
<span class="t" style="left:650.32px;top:491px;font-size:9.3px;line-height:10px;color:#555;transform:scaleX(0.9666);transform-origin:0 0;">1 - 23 / 23</span>
<span class="t" style="left:224.83px;top:478px;font-size:9.6px;line-height:11px;color:#4a5a4b;transform:scaleX(0.7193);transform-origin:0 0;font-weight:700;-webkit-text-stroke:0.35px;">ABC</span>
<span class="t" style="left:250.33px;top:476px;font-size:11.5px;line-height:12px;color:#555;transform:scaleX(0.9771);transform-origin:0 0;">Браузер</span>
<span class="t" style="left:51.69px;top:803px;font-size:9.8px;line-height:11px;color:#757575;transform:scaleX(1.021);transform-origin:0 0;">Последнее обновление данных: 26.05.2022 12:29:17</span>
<span class="t" style="left:1026.88px;top:123px;font-size:15.3px;line-height:17px;color:#202124;transform:scaleX(1.0736);transform-origin:0 0;">Диаграмма</span>
<span class="t" style="left:1136.95px;top:123px;font-size:15.3px;line-height:17px;color:#202124;transform:scaleX(1.0259);transform-origin:0 0;">Таблица</span>
<span class="t" style="left:980.71px;top:170px;font-size:12.5px;line-height:14px;color:#3367d6;transform:scaleX(1.0292);transform-origin:0 0;">ДАННЫЕ</span>
<span class="t" style="left:1082.14px;top:170px;font-size:12.5px;line-height:14px;color:#6b6b6b;transform:scaleX(1.0424);transform-origin:0 0;">СТИЛЬ</span>
<span class="t" style="left:965.36px;top:213px;font-size:11px;line-height:12px;color:#6a6e73;transform:scaleX(1.0405);transform-origin:0 0;-webkit-text-stroke:0.38px;">Развернуть</span>
<span class="t" style="left:965.37px;top:270px;font-size:11px;line-height:12px;color:#7d7d7d;transform:scaleX(1.0383);transform-origin:0 0;-webkit-text-stroke:0.38px;">Показатель</span>
<span class="t" style="left:971.5px;top:301px;font-size:8.8px;line-height:10px;color:#333;transform:scaleX(0.8413);transform-origin:0 0;font-weight:700;">CTD</span>
<span class="t" style="left:998.38px;top:299px;font-size:11px;line-height:12px;color:#212121;transform:scaleX(0.9921);transform-origin:0 0;">App version</span>
<span class="t" style="left:966.22px;top:363px;font-size:11px;line-height:12px;color:#6a6e73;transform:scaleX(1.032);transform-origin:0 0;-webkit-text-stroke:0.38px;">Дополнительные</span>
<span class="t" style="left:965.5px;top:388px;font-size:11px;line-height:12px;color:#6a6e73;transform:scaleX(1.0451);transform-origin:0 0;-webkit-text-stroke:0.38px;">показатели</span>
<span class="t" style="left:965.37px;top:422px;font-size:11px;line-height:12px;color:#6a6e73;transform:scaleX(1.0428);transform-origin:0 0;-webkit-text-stroke:0.38px;">Ползунки показателя</span>
<span class="t" style="left:965.73px;top:479px;font-size:11px;line-height:12px;color:#cfcfcf;transform:scaleX(1.0264);transform-origin:0 0;-webkit-text-stroke:0.38px;">Строк на странице</span>
<span class="t" style="left:993.86px;top:508px;font-size:10.5px;line-height:12px;color:#cfcfcf;transform:scaleX(1.0546);transform-origin:0 0;">100</span>
<span class="t" style="left:965.72px;top:566px;font-size:11px;line-height:12px;color:#cfcfcf;transform:scaleX(1.0445);transform-origin:0 0;-webkit-text-stroke:0.38px;">Строка итоговых</span>
<span class="t" style="left:966.03px;top:579px;font-size:11px;line-height:12px;color:#cfcfcf;transform:scaleX(1.0318);transform-origin:0 0;-webkit-text-stroke:0.38px;">значений</span>
<span class="t" style="left:995.36px;top:614px;font-size:11px;line-height:12px;color:#d4d4d4;transform:scaleX(1.0494);transform-origin:0 0;">Показывать строку</span>
<span class="t" style="left:995.51px;top:634px;font-size:11px;line-height:12px;color:#d4d4d4;transform:scaleX(1.0402);transform-origin:0 0;">итоговых значений</span>
<span class="t" style="left:965.73px;top:689px;font-size:11px;line-height:12px;color:#cfcfcf;transform:scaleX(1.0199);transform-origin:0 0;-webkit-text-stroke:0.38px;">Сортировка</span>
<span class="t" style="left:971.62px;top:719px;font-size:9.4px;line-height:11px;color:#a9a9a9;transform:scaleX(0.7849);transform-origin:0 0;font-weight:700;-webkit-text-stroke:0.25px;">AUT</span>
<span class="t" style="left:997.83px;top:718px;font-size:11px;line-height:12px;color:#a9a9a9;transform:scaleX(1.012);transform-origin:0 0;">Сеансы</span>
<span class="t" style="left:995.68px;top:757px;font-size:11px;line-height:12px;color:#d4d4d4;transform:scaleX(1.0271);transform-origin:0 0;">По убыванию</span>
<span class="t" style="left:995.68px;top:797px;font-size:11px;line-height:12px;color:#d4d4d4;transform:scaleX(1.0318);transform-origin:0 0;">По возрастанию</span>
<span class="t" style="left:965.92px;top:855px;font-size:11px;line-height:12px;color:#cfcfcf;transform:scaleX(1.0237);transform-origin:0 0;-webkit-text-stroke:0.38px;">Дополнительная</span>
<span class="t" style="left:1126.22px;top:212px;font-size:11px;line-height:12px;color:#7a7a7a;transform:scaleX(1.0435);transform-origin:0 0;-webkit-text-stroke:0.38px;">Доступные поля</span>
<span class="t" style="left:1157.2px;top:237px;font-size:12px;line-height:14px;color:#8e8e8e;transform:scaleX(1.014);transform-origin:0 0;">Введите запрос</span>
<span class="t" style="left:1131.83px;top:270px;font-size:10px;line-height:11px;color:#1d3a20;transform:scaleX(0.6716);transform-origin:0 0;font-weight:700;-webkit-text-stroke:0.45px;">ABC</span>
<span class="t" style="left:1157.28px;top:269px;font-size:11px;line-height:12px;color:#141414;transform:scaleX(1.0179);transform-origin:0 0;">Браузер</span>
<span class="t" style="left:1131.83px;top:292px;font-size:10px;line-height:11px;color:#85c888;transform:scaleX(0.6716);transform-origin:0 0;font-weight:700;-webkit-text-stroke:0.45px;">ABC</span>
<span class="t" style="left:1157.29px;top:291px;font-size:11px;line-height:12px;color:#141414;transform:scaleX(1.0079);transform-origin:0 0;">Бренд товара</span>
<span class="t" style="left:1131.83px;top:314px;font-size:10px;line-height:11px;color:#85c888;transform:scaleX(0.6716);transform-origin:0 0;font-weight:700;-webkit-text-stroke:0.45px;">ABC</span>
<span class="t" style="left:1157.31px;top:313px;font-size:11px;line-height:12px;color:#141414;transform:scaleX(0.989);transform-origin:0 0;">Версия ОС</span>
<span class="t" style="left:1131.83px;top:336px;font-size:10px;line-height:11px;color:#85c888;transform:scaleX(0.6716);transform-origin:0 0;font-weight:700;-webkit-text-stroke:0.45px;">ABC</span>
<span class="t" style="left:1157.27px;top:335px;font-size:11px;line-height:12px;color:#141414;transform:scaleX(1.0278);transform-origin:0 0;">Возраст</span>
<span class="t" style="left:1131.83px;top:358px;font-size:10px;line-height:11px;color:#85c888;transform:scaleX(0.6716);transform-origin:0 0;font-weight:700;-webkit-text-stroke:0.45px;">ABC</span>
<span class="t" style="left:1157.28px;top:357px;font-size:11px;line-height:12px;color:#141414;transform:scaleX(1.0196);transform-origin:0 0;">Вход с ИД польз.</span>
<span class="t" style="left:1157.31px;top:379px;font-size:11px;line-height:12px;color:#141414;transform:scaleX(0.9826);transform-origin:0 0;">Год</span>
<span class="t" style="left:1157.29px;top:401px;font-size:11px;line-height:12px;color:#141414;transform:scaleX(1.0055);transform-origin:0 0;">Город</span>
<span class="t" style="left:1131.83px;top:424px;font-size:10px;line-height:11px;color:#85c888;transform:scaleX(0.6716);transform-origin:0 0;font-weight:700;-webkit-text-stroke:0.45px;">ABC</span>
<span class="t" style="left:1157.31px;top:423px;font-size:11px;line-height:12px;color:#141414;transform:scaleX(0.9853);transform-origin:0 0;">Группа каналов по у…</span>
<span class="t" style="left:1158.12px;top:445px;font-size:11px;line-height:12px;color:#141414;transform:scaleX(0.9902);transform-origin:0 0;">Дата</span>
<span class="t" style="left:1158.12px;top:467px;font-size:11px;line-height:12px;color:#141414;transform:scaleX(1.0125);transform-origin:0 0;">Дата первого сеанса</span>
<span class="t" style="left:1158.12px;top:489px;font-size:11px;line-height:12px;color:#141414;transform:scaleX(1.0386);transform-origin:0 0;">День</span>
<span class="t" style="left:1158.12px;top:511px;font-size:11px;line-height:12px;color:#141414;transform:scaleX(1.0142);transform-origin:0 0;">День недели</span>
<span class="t" style="left:1131.83px;top:534px;font-size:10px;line-height:11px;color:#85c888;transform:scaleX(0.6716);transform-origin:0 0;font-weight:700;-webkit-text-stroke:0.45px;">ABC</span>
<span class="t" style="left:1158.12px;top:533px;font-size:11px;line-height:12px;color:#141414;transform:scaleX(1.0312);transform-origin:0 0;">День N</span>
<span class="t" style="left:1131.83px;top:556px;font-size:10px;line-height:11px;color:#85c888;transform:scaleX(0.6716);transform-origin:0 0;font-weight:700;-webkit-text-stroke:0.45px;">ABC</span>
<span class="t" style="left:1157.83px;top:555px;font-size:11px;line-height:12px;color:#141414;transform:scaleX(1.0413);transform-origin:0 0;">Заголовок страницы</span>
<span class="t" style="left:1131.83px;top:578px;font-size:10px;line-height:11px;color:#85c888;transform:scaleX(0.6716);transform-origin:0 0;font-weight:700;-webkit-text-stroke:0.45px;">ABC</span>
<span class="t" style="left:1157.84px;top:577px;font-size:11px;line-height:12px;color:#141414;transform:scaleX(0.9973);transform-origin:0 0;">Заголовок страницы…</span>
<span class="t" style="left:1131.83px;top:600px;font-size:10px;line-height:11px;color:#85c888;transform:scaleX(0.6716);transform-origin:0 0;font-weight:700;-webkit-text-stroke:0.45px;">ABC</span>
<span class="t" style="left:1157.84px;top:599px;font-size:11px;line-height:12px;color:#141414;transform:scaleX(0.9973);transform-origin:0 0;">Заголовок страницы…</span>
<span class="t" style="left:1131.83px;top:622px;font-size:10px;line-height:11px;color:#85c888;transform:scaleX(0.6716);transform-origin:0 0;font-weight:700;-webkit-text-stroke:0.45px;">ABC</span>
<span class="t" style="left:1157.33px;top:621px;font-size:11px;line-height:12px;color:#141414;transform:scaleX(0.9689);transform-origin:0 0;">Идентификатор ауди…</span>
<span class="t" style="left:1131.83px;top:644px;font-size:10px;line-height:11px;color:#85c888;transform:scaleX(0.6716);transform-origin:0 0;font-weight:700;-webkit-text-stroke:0.45px;">ABC</span>
<span class="t" style="left:1157.31px;top:643px;font-size:11px;line-height:12px;color:#141414;transform:scaleX(0.9842);transform-origin:0 0;">Идентификатор горо…</span>
<span class="t" style="left:1131.83px;top:666px;font-size:10px;line-height:11px;color:#85c888;transform:scaleX(0.6716);transform-origin:0 0;font-weight:700;-webkit-text-stroke:0.45px;">ABC</span>
<span class="t" style="left:1157.31px;top:665px;font-size:11px;line-height:12px;color:#141414;transform:scaleX(0.9909);transform-origin:0 0;">Идентификатор груп…</span>
<span class="t" style="left:1131.83px;top:688px;font-size:10px;line-height:11px;color:#85c888;transform:scaleX(0.6716);transform-origin:0 0;font-weight:700;-webkit-text-stroke:0.45px;">ABC</span>
<span class="t" style="left:1157.31px;top:687px;font-size:11px;line-height:12px;color:#141414;transform:scaleX(0.9909);transform-origin:0 0;">Идентификатор груп…</span>
<span class="t" style="left:1131.83px;top:710px;font-size:10px;line-height:11px;color:#85c888;transform:scaleX(0.6716);transform-origin:0 0;font-weight:700;-webkit-text-stroke:0.45px;">ABC</span>
<span class="t" style="left:1157.31px;top:709px;font-size:11px;line-height:12px;color:#141414;transform:scaleX(0.9909);transform-origin:0 0;">Идентификатор груп…</span>
<span class="t" style="left:1131.83px;top:732px;font-size:10px;line-height:11px;color:#85c888;transform:scaleX(0.6716);transform-origin:0 0;font-weight:700;-webkit-text-stroke:0.45px;">ABC</span>
<span class="t" style="left:1157.29px;top:731px;font-size:11px;line-height:12px;color:#141414;transform:scaleX(1.0049);transform-origin:0 0;">Идентификатор кам…</span>
<span class="t" style="left:1131.83px;top:754px;font-size:10px;line-height:11px;color:#85c888;transform:scaleX(0.6716);transform-origin:0 0;font-weight:700;-webkit-text-stroke:0.45px;">ABC</span>
<span class="t" style="left:1157.32px;top:753px;font-size:11px;line-height:12px;color:#141414;transform:scaleX(0.9768);transform-origin:0 0;">Идентификатор пото…</span>
<span class="t" style="left:1131.83px;top:776px;font-size:10px;line-height:11px;color:#85c888;transform:scaleX(0.6716);transform-origin:0 0;font-weight:700;-webkit-text-stroke:0.45px;">ABC</span>
<span class="t" style="left:1157.3px;top:775px;font-size:11px;line-height:12px;color:#141414;transform:scaleX(0.9986);transform-origin:0 0;">Идентификатор про…</span>
<span class="t" style="left:1131.83px;top:798px;font-size:10px;line-height:11px;color:#85c888;transform:scaleX(0.6716);transform-origin:0 0;font-weight:700;-webkit-text-stroke:0.45px;">ABC</span>
<span class="t" style="left:1157.3px;top:797px;font-size:11px;line-height:12px;color:#141414;transform:scaleX(1);transform-origin:0 0;">Идентификатор сод…</span>
<span class="t" style="left:1131.83px;top:820px;font-size:10px;line-height:11px;color:#85c888;transform:scaleX(0.6716);transform-origin:0 0;font-weight:700;clip-path:inset(-10px -5px 6.8px -5px);-webkit-text-stroke:0.45px;">ABC</span>
<span class="t" style="left:1157.29px;top:819px;font-size:11px;line-height:12px;color:#141414;transform:scaleX(1.0127);transform-origin:0 0;clip-path:inset(-9px -5px 6.8px -5px);">Идентификатор стр…</span>
<span class="t" style="left:1157.72px;top:834px;font-size:11.3px;line-height:12px;color:#4054c8;transform:scaleX(0.9289);transform-origin:0 0;">ДОБАВИТЬ ПОЛЕ</span>
<span class="t" style="left:1157.73px;top:856px;font-size:11.3px;line-height:12px;color:#4054c8;transform:scaleX(0.9042);transform-origin:0 0;">ДОБАВИТЬ ПАРАМЕ…</span>
</div>
</body></html>
